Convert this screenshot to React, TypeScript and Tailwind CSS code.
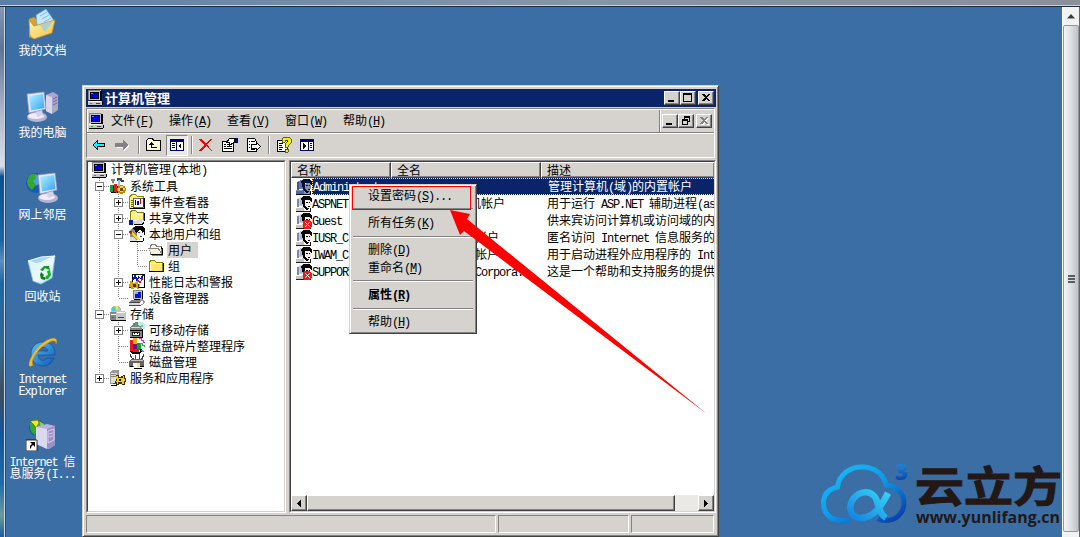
import type { ReactNode } from "react";
import clsx from "clsx";

// Chinese runs are 12px per glyph, latin runs are 6px per glyph
function Txt({ s, className }: { s: string; className?: string }) {
   const parts = s.split(/([\x20-\x7e]+)/).filter(Boolean);
   return (
      <span className={clsx("whitespace-pre", className)}>
         {parts.map((part, i) => {
            if (!/^[\x20-\x7e]/.test(part)) return <span key={i}>{part}</span>;
            const bits = part.split(/(&.)/).filter(Boolean);
            return (
               <span key={i} className="font-['Liberation_Mono',monospace] text-[12px] tracking-[-1.2px]">
                  {bits.map((bit, j) =>
                     bit[0] === "&" ? <span key={j} className="underline underline-offset-1">{bit[1]}</span> : bit
                  )}
               </span>
            );
         })}
      </span>
   );
}

function Ico({ children, w = 16, h = 16, className }: { children: ReactNode; w?: number; h?: number; className?: string }) {
   return (
      <svg width={w} height={h} viewBox={`0 0 ${w} ${h}`} shapeRendering="crispEdges" className={clsx("block shrink-0", className)}>
         {children}
      </svg>
   );
}

const ComputerIcon = () => (
   <Ico>
      <path d="M2 0h12v10H2z" fill="#c6c3c6" />
      <path d="M1 0h12v1H2v9H1z" fill="#848284" />
      <path d="M13 1h1v10H3v-1h10zM14 1h1v10h-1z" fill="#000" />
      <path d="M3 2h9v7H3z" fill="#000" />
      <path d="M4 3h7v5H4z" fill="#0000de" />
      <path d="M4 3h2v1H4z" fill="#6b8cff" />
      <path d="M1 11h13l1 1v3H1z" fill="#c6c3c6" />
      <path d="M1 11h13v1H1z" fill="#fff" />
      <path d="M1 15h14v1H1zM15 12h1v3h-1z" fill="#000" />
      <path d="M3 13h2v1H3z" fill="#00c000" />
      <path d="M9 13h4v1H9z" fill="#424142" />
   </Ico>
);

const ToolsIcon = () => (
   <Ico>
      <path d="M1 1h4v2H4v3H2V3H1z" fill="#84867b" />
      <path d="M2 5h2v3H2z" fill="#e7e3e7" />
      <path d="M7 0h5v2h2v2h-3V3H7z" fill="#424142" />
      <path d="M8 2h2v7H8z" fill="#94c6de" />
      <path d="M0 7h4v7H0z" fill="#00a639" />
      <path d="M4 6h3v9H4z" fill="#d62018" />
      <path d="M3 8h1v7H3zM7 8h1v7H7zM1 14h5v1H1z" fill="#000" />
      <path d="M10 7h3v1h2v2h1v3h-1v2h-2v1h-3v-1H8v-2H7v-3h1V8h2z" fill="#b58a00" />
      <path d="M10 8h3v2h2v2h-2v2h-3v-1H8v-3h2z" fill="#f7d54a" />
      <path d="M10 10h3v3h-3z" fill="#734d00" />
   </Ico>
);

const EventIcon = () => (
   <Ico>
      <path d="M0 3l2-3h5l1 2h7v13H0z" fill="#8c8a00" />
      <path d="M1 3l2-2h3l2 2h6v11H1z" fill="#ffef84" />
      <path d="M5 4h9v9H4V6z" fill="#fff" stroke="#000" strokeWidth=".6" />
      <path d="M6 6h1v5H6z" fill="#000" />
      <path d="M8 7h2v4H8z" fill="#0000d6" />
      <path d="M11 5h1v5h-1z" fill="#e00000" />
      <path d="M2 6h2M2 8h2M2 10h2M2 12h2" stroke="#6b6900" />
      <path d="M1 15h15V4h-1v10H1z" fill="#000" />
   </Ico>
);

const ShareIcon = () => (
   <Ico>
      <path d="M1 2l1-2h5l1 2h7v9H1z" fill="#848200" />
      <path d="M2 2l1-1h3l2 2h6v8H2z" fill="#ffef84" />
      <path d="M3 4h11v1H3z" fill="#fff7b5" />
      <path d="M0 10h4v5H0z" fill="#0018b5" />
      <path d="M4 10h5l2-1h3l1 2-3 3H4z" fill="#ded7de" />
      <path d="M4 10h4v1H4z" fill="#fff" />
      <path d="M5 14h8l2-3v2l-2 2H5zM15 3h1v8h-1z" fill="#000" />
   </Ico>
);

const UsersIcon = () => (
   <Ico>
      <path d="M1 4l3-3h5v13H1z" fill="#8c8a84" />
      <path d="M4 2l3-2h6l3 3v5l-2 3h-1l-5-3z" fill="#000" />
      <path d="M8 6l2-2h2l1 2h2v4l-2 3h-3l-2-3z" fill="#f7f3ef" />
      <path d="M9 6h2v1H9zM13 6h1v1h-1zM11 10h2v1h-2z" fill="#424142" />
      <path d="M0 5h2l9 8v2h-2z" fill="#f7d533" />
      <path d="M0 5h3v3H1z" fill="#d61818" />
      <path d="M1 11h4l3 4H1z" fill="#dedbde" />
      <path d="M9 13l2 1 3-2v3H9z" fill="#fff" />
      <path d="M1 15h13v1H1zM14 12h1v3h-1z" fill="#000" />
   </Ico>
);

const FolderIcon = () => (
   <Ico>
      <path d="M1 4l1-2h5l1 2h7v10H1z" fill="#848200" />
      <path d="M2 4l1-1h3l2 2h6v8H2z" fill="#ffe763" />
      <path d="M2 5h12v1H2zM2 6h1v7H2z" fill="#fffbc6" />
      <path d="M1 14h15V5h-1v8H1z" fill="#000" />
   </Ico>
);

const OpenFolderIcon = () => (
   <Ico>
      <path d="M2 4l1-2h4l2 2h5v9H2z" fill="#848284" />
      <path d="M3 4l1-1h2l2 2h5v8H3z" fill="#fffbce" />
      <path d="M0 6h11l4 8H4z" fill="#848284" />
      <path d="M1 7h9l4 6H4z" fill="#f7f3d6" />
      <path d="M3 13h12V7l-2-2v1l1 2v4H3z" fill="#000" />
   </Ico>
);

const PerfIcon = () => (
   <Ico>
      <path d="M3 0h12v13H3z" fill="#fff" stroke="#000" />
      <path d="M4 6l2-4 2 4 2-3 2 2 2-4" fill="none" stroke="#0018d6" strokeWidth="1.4" />
      <path d="M6 9l3-3 2 3 3-5" fill="none" stroke="#e01010" />
      <path d="M1 7h2l1 2h2l1-2h2v3h2v3h-1v2H8v-1H5v1H2v-2H0v-3h1z" fill="#dea500" />
      <path d="M4 10h3v3H4zM0 13h2v1H0zM9 10h1v4H9z" fill="#423400" />
   </Ico>
);

const DeviceIcon = () => (
   <Ico>
      <path d="M4 0h10v9H4z" fill="#c6c3c6" />
      <path d="M4 0h10v1H4zM4 0h1v9H4z" fill="#848284" />
      <path d="M6 2h6v6H6z" fill="#0018ce" />
      <path d="M6 2h3v2H6z" fill="#7bb2ff" />
      <path d="M13 1h1v9H5V9h8z" fill="#000" />
      <path d="M2 10h11l-1 2H1z" fill="#848684" />
      <path d="M0 12h11v3H0z" fill="#ded7de" />
      <path d="M0 12h11v1H0zM0 15h12v1H0z" fill="#424142" />
      <path d="M11 9h3l2 3-2 3h-2z" fill="#9c9a9c" />
      <path d="M12 11h2v3h-2z" fill="#fff" />
   </Ico>
);

const StorageIcon = () => (
   <Ico>
      <path d="M3 0h5l3 3v3H1V2z" fill="#bdbebd" />
      <path d="M2 1h3l1 4H2z" fill="#39d6d6" />
      <path d="M6 0h2v4H6z" fill="#f7e742" />
      <path d="M0 6h12v8H0z" fill="#848684" />
      <path d="M6 5h9l1 2v7H6z" fill="#c6c7c6" />
      <path d="M7 6h8v1H7zM1 8h5v1H1z" fill="#fff" />
      <path d="M8 11h6v1H8z" fill="#424142" />
      <path d="M1 14h15v1H1z" fill="#000" />
      <path d="M2 11h2v1H2z" fill="#00a200" />
   </Ico>
);

const RemovableIcon = () => (
   <Ico>
      <path d="M4 1l4-1 3 2v4H3z" fill="#7b7d7b" />
      <path d="M9 0h4l3 3v4l-4 1-2-3z" fill="#bdefef" />
      <path d="M6 1h2v3H6z" fill="#29c639" />
      <path d="M12 3h2v2h-2z" fill="#a5a2a5" />
      <path d="M2 4h10l1 3v8H1V6z" fill="#848684" />
      <path d="M2 5h9v1H2z" fill="#dedbde" />
      <path d="M1 8h12v1H1zM1 15h13v1H1zM13 7h1v8h-1z" fill="#000" />
      <path d="M3 10h8v4H3z" fill="#212021" />
      <path d="M4 11h6v2H4z" fill="#fff" />
      <path d="M5 11h1v1H5zM8 11h1v1H8z" fill="#000" />
   </Ico>
);

const DefragIcon = () => (
   <Ico>
      <path d="M1 2h3v11H1z" fill="#e71818" />
      <path d="M4 0h4v6H4z" fill="#d6b600" />
      <path d="M8 5h4v6H8z" fill="#00a621" />
      <path d="M4 6h4v6H4z" fill="#7b1073" />
      <path d="M3 11h8l-2 4H3z" fill="#e71818" />
      <path d="M1 13h3v1h7v-3h2v3l-3 2H3z" fill="#000" />
      <path d="M10 0h2v2h2v2h2" stroke="#e721de" fill="none" />
      <path d="M11 5h2v2h2v2" stroke="#10ce39" fill="none" />
      <path d="M12 12l3 2" stroke="#18a6e7" />
      <path d="M5 8h2v2H5z" fill="#1828e7" />
   </Ico>
);

const DiskIcon = () => (
   <Ico>
      <path d="M1 0h1v2h1v2h2v2H3V4H2V3H1zM14 0h1v3h-1v2h-2V4h1V2h1z" fill="#424142" />
      <path d="M6 1h1v5H6z" fill="#1848c6" />
      <path d="M10 0h1v6h-1z" fill="#d61010" />
      <path d="M2 5h12l1 2v6H0V7z" fill="#636563" />
      <path d="M2 6h12v1H2z" fill="#c6c3c6" />
      <path d="M4 9h7v5H6L4 12z" fill="#fff" />
      <path d="M8 9h3v4H8z" fill="#f7e773" />
      <path d="M1 12h3v1H1zM11 12h4v1h-4zM5 14h8v1H5z" fill="#000" />
   </Ico>
);

const ServicesIcon = () => (
   <Ico>
      <path d="M0 2l2-2h7v2l-1 12H0z" fill="#9c9a9c" />
      <path d="M1 3h6v10H1z" fill="#dedbde" />
      <path d="M1 4h5v1H1zM1 6h5v1H1z" fill="#848284" />
      <path d="M3 13h3v1H3z" fill="#e01010" />
      <path d="M1 15h6v1H1z" fill="#000" />
      <path d="M6 5h3v2h2V6h2V5h2v3h1v4h-1v3h-3v-1H9v1H6v-2H5v-2h1z" fill="#423400" />
      <path d="M6 6h2v2h5V6h1v3h1v2h-1v3h-2v-2H8v2H7v-2H6v-1h1V9H6z" fill="#f7ce29" />
      <path d="M9 9h2v2H9z" fill="#000" />
   </Ico>
);

function UserIcon({ disabled, selected }: { disabled?: boolean; selected?: boolean }) {
   return (
      <Ico>
         <path d="M2 2l3-1h4v9H2z" fill={selected ? "#6b7da5" : "#ceced6"} />
         <path d="M1 3h2v8H1z" fill={selected ? "#42558c" : "#8486a5"} />
         <path d="M4 4h3v5H4z" fill={selected ? "#5a6db5" : "#9cbede"} />
         <path d="M5 2l2-2h6l3 2v4l-2-1-1-1H9l1 4 3 4v1l-3 1-3-4z" fill={selected ? "#00103a" : "#000"} />
         <path d="M9 6l1-2h3l2 2v3l-1 3h-3l-2-3z" fill={selected ? "#8c92a5" : "#f7ebe7"} />
         <path d="M10 6h2v1h-2zM13 6h1v1h-1zM12 10h2v1h-2z" fill={selected ? "#00103a" : "#000"} />
         <path d="M0 11h8v4H0z" fill={selected ? "#52659c" : "#c6c3c6"} />
         <path d="M0 11h6v1H0z" fill={selected ? "#8492b5" : "#fff"} />
         <path d="M0 15h15v1H0zM14 12h1v3h-1z" fill={selected ? "#00103a" : "#212021"} />
         <path d="M8 12l3 2 3-2v3H8z" fill={selected ? "#8492b5" : "#fff"} />
         {disabled && (
            <>
               <path d="M8 7h6v1h1v1h1v5h-1v1h-1v1H8v-1H7V8h1z" fill="#f01818" />
               <path d="M9 9l5 5M14 9l-5 5" stroke="#fff" strokeWidth="1.4" />
            </>
         )}
      </Ico>
   );
}

// One 19x16 tree cell: guide line, optional branch and expander box
function Guide({ kind }: { kind: string }) {
   const box = kind.length > 1;
   return (
      <Ico w={19}>
         <path d={kind[0] === "L" ? "M8.5 0V8" : "M8.5 0V16"} stroke="#848284" strokeDasharray="1 1" />
         {kind[0] !== "|" && <path d="M9 8.5H19" stroke="#848284" strokeDasharray="1 1" />}
         {box && (
            <>
               <rect x="4.5" y="4.5" width="8" height="8" fill="#fff" stroke="#848284" />
               <path d="M6 8.5h5" stroke="#000" />
               {kind[1] === "+" && <path d="M8.5 6v5" stroke="#000" />}
            </>
         )}
      </Ico>
   );
}

const tree = [
   { label: "计算机管理(本地)", guides: [], icon: <ComputerIcon /> },
   { label: "系统工具", guides: ["T-"], icon: <ToolsIcon /> },
   { label: "事件查看器", guides: ["|", "T+"], icon: <EventIcon /> },
   { label: "共享文件夹", guides: ["|", "T+"], icon: <ShareIcon /> },
   { label: "本地用户和组", guides: ["|", "T-"], icon: <UsersIcon /> },
   { label: "用户", guides: ["|", "|", "T"], icon: <OpenFolderIcon />, selected: true },
   { label: "组", guides: ["|", "|", "L"], icon: <FolderIcon /> },
   { label: "性能日志和警报", guides: ["|", "T+"], icon: <PerfIcon /> },
   { label: "设备管理器", guides: ["|", "L"], icon: <DeviceIcon /> },
   { label: "存储", guides: ["T-"], icon: <StorageIcon /> },
   { label: "可移动存储", guides: ["|", "T+"], icon: <RemovableIcon /> },
   { label: "磁盘碎片整理程序", guides: ["|", "T"], icon: <DefragIcon /> },
   { label: "磁盘管理", guides: ["|", "L"], icon: <DiskIcon /> },
   { label: "服务和应用程序", guides: ["L+"], icon: <ServicesIcon /> },
];

const users = [
   { name: "Administrator", full: "", desc: "管理计算机(域)的内置帐户", selected: true },
   { name: "ASPNET", full: "ASP.NET 计算机帐户", desc: "用于运行 ASP.NET 辅助进程(aspnet_wp.exe)" },
   { name: "Guest", full: "", desc: "供来宾访问计算机或访问域的内置帐户", disabled: true },
   { name: "IUSR_C...", full: "Internet 来宾帐户", desc: "匿名访问 Internet 信息服务的内置帐户" },
   { name: "IWAM_C...", full: "启动 IIS 进程帐户", desc: "用于启动进程外应用程序的 Internet 信息服务" },
   { name: "SUPPORT...", full: "CN=Microsoft Corpora...", desc: "这是一个帮助和支持服务的提供商帐户", disabled: true },
];

const raised = "border border-t-white border-l-white border-r-[#424142] border-b-[#424142] shadow-[inset_-1px_-1px_0_#848284] bg-[#d6d3ce]";

function WinButton({ children, className }: { children: ReactNode; className?: string }) {
   return (
      <div className={clsx("h-[14px] w-4", raised, className)}>
         <svg width="14" height="12" viewBox="0 0 14 12" shapeRendering="crispEdges" className="block">
            {children}
         </svg>
      </div>
   );
}

const ToolSep = ({ className }: { className?: string }) => (
   <div className={clsx("h-[18px] w-[2px] border-l border-[#848284] bg-white", className)} />
);

const MenuSep = ({ className }: { className?: string }) => (
   <div className={clsx("mx-[2px] h-[2px] border-t border-[#848284] bg-white", className)} />
);

function MenuItem({ s, className }: { s: string; className?: string }) {
   return (
      <div className={clsx("flex h-[18px] items-center pl-[17px]", className)}>
         <Txt s={s} />
      </div>
   );
}

function ContextMenu() {
   return (
      <div className="absolute left-[349px] top-[184px] h-[150px] w-[128px] border border-[#d6d3ce] border-r-[#424142] border-b-[#424142] bg-[#d6d3ce] p-px shadow-[inset_1px_1px_0_#fff,inset_-1px_-1px_0_#848284]">
         <MenuItem s="设置密码(&S)..." className="mt-px" />
         <MenuSep className="mt-[3px]" />
         <MenuItem s="所有任务(&K)" className="mt-1" />
         <MenuSep className="mt-1" />
         <MenuItem s="删除(&D)" className="mt-[3px]" />
         <MenuItem s="重命名(&M)" />
         <MenuSep className="mt-[3px]" />
         <MenuItem s="属性(&R)" className="mt-1 font-bold" />
         <MenuSep className="mt-1" />
         <MenuItem s="帮助(&H)" className="mt-[3px]" />
         <div className="absolute left-[2px] top-px h-[24px] w-[119px] border border-[#f00]" />
      </div>
   );
}

function Toolbar() {
   return (
      <div className="flex h-[22px] items-center pl-[5px]">
         <Ico w={14} h={14}>
            <path d="M0 7l5-5h1v3h7v4H6v3H5z" fill="#000" />
            <path d="M1 7l4-4v3h7v2H5v2z" fill="#00ffff" />
         </Ico>
         <Ico w={15} h={14} className="ml-[9px]">
            <path d="M14 8l-5 5v-3H2V6h7V3z" fill="#fff" />
            <path d="M13 7L8 2v3H0v4h8v3z" fill="#848284" />
         </Ico>
         <ToolSep className="ml-[8px]" />
         <Ico className="ml-[5px]">
            <path d="M1.500 3.500l2-2h4l1 2h7v10h-14z" fill="#fffbce" stroke="#000" />
            <path d="M6 5h1v1h1v1h1v1H7v2h5v1H6V8H4V7h1V6h1z" fill="#000" />
         </Ico>
         <div className="ml-[5px] flex h-[21px] w-[22px] items-center justify-center border border-[#848284] border-r-white border-b-white bg-[#ebe9e6]">
            <Ico w={14} h={12}>
               <path d="M0 0h14v12H0z" fill="#00006b" />
               <path d="M1 3h5v8H1zM7 3h6v8H7z" fill="#fff" />
               <path d="M2 4h3v1H2zM2 6h3v1H2zM2 8h3v1H2z" fill="#00006b" />
               <path d="M11 4v6L8 7z" fill="#000" />
            </Ico>
         </div>
         <ToolSep className="ml-[3px]" />
         <Ico w={14} h={14} className="ml-[6px]">
            <path d="M0 1h2l5 4 5-4h2L8 6l5 7h-1L7 8l-5 5H0l5-6z" fill="#f00" />
         </Ico>
         <Ico className="ml-[9px]">
            <path d="M.5 4.500h11v10H.5z" fill="#fff" stroke="#000" />
            <path d="M2 7h2v1H2zM5 7h5v1H5zM2 9h2v1H2zM5 9h5v1H5zM2 11h8v1H2z" fill="#000" />
            <path d="M4.500 5.500l3-4h5v4l-3 1-2 2V6z" fill="#fff" stroke="#000" />
            <path d="M13 1h3v5h-3z" fill="#000084" />
         </Ico>
         <Ico className="ml-[8px]">
            <path d="M1.500 1.500h7l2 3v10h-9z" fill="#fff" stroke="#000" />
            <path d="M3 4h1v1H3zM5 4h4v1H5zM3 7h1v1H3zM3 10h1v1H3zM5 12h4v1H5z" fill="#000" />
            <path d="M5.500 7.500h5v-2l4 4-4 4v-2h-5z" fill="#fff" stroke="#000" />
         </Ico>
         <ToolSep className="ml-[6px]" />
         <Ico className="ml-[6px]">
            <path d="M1.500 3.500h10v11h-10z" fill="#fff" stroke="#000" />
            <path d="M3 6h4v1H3zM3 8h3v1H3zM3 10h4v1H3zM3 12h3v1H3z" fill="#000" />
            <path d="M6 2l2-2h5l2 2v4l-3 3v1H9V7l3-3-1-1H9v2H6z" fill="#f7ef00" stroke="#424100" strokeWidth=".8" />
            <path d="M9 12h3v3H9z" fill="#f7ef00" stroke="#424100" strokeWidth=".8" />
         </Ico>
         <Ico w={14} h={12} className="ml-[8px]">
            <path d="M0 0h14v12H0z" fill="#00006b" />
            <path d="M1 3h7v8H1zM9 3h4v8H9z" fill="#fff" />
            <path d="M10 4h2v1h-2zM10 6h2v1h-2zM10 8h2v1h-2z" fill="#00006b" />
            <path d="M3 4v6l4-3z" fill="#000" />
         </Ico>
      </div>
   );
}

function ListPane() {
   return (
      <div className="flex w-[427px] flex-col overflow-hidden border border-t-[#848284] border-l-[#848284] border-r-white border-b-white">
         <div className="flex min-h-0 flex-1 flex-col overflow-hidden border border-t-[#424142] border-l-[#424142] border-r-[#d6d3ce] border-b-[#d6d3ce] bg-white">
            <div className="flex h-4 shrink-0">
               {["名称", "全名", "描述"].map((title, i) => (
                  <div key={title} className={clsx("flex shrink-0 items-center pl-[5px]", raised, i === 0 ? "w-[100px]" : i === 1 ? "w-[150px]" : "w-[173px] border-r-0")}>
                     <Txt s={title} />
                  </div>
               ))}
            </div>
            {users.map(u => (
               <div key={u.name} className={clsx("flex h-[17px] shrink-0 items-center pl-[5px]", u.selected && "text-white")}>
                  <UserIcon disabled={u.disabled} selected={u.selected} />
                  <div className={clsx("flex h-[17px] w-[402px] overflow-hidden", u.selected && "border border-r-0 border-dotted border-[#f7db94] bg-[#0a246a] leading-[14px]")}>
                     <Txt s={u.name} className="w-[85px] shrink-0 overflow-hidden" />
                     <Txt s={u.full} className="w-[150px] shrink-0" />
                     <Txt s={u.desc} />
                  </div>
               </div>
            ))}
            <div className="mt-auto flex h-4 shrink-0 bg-[#ebe9e6]">
               <div className={clsx("flex w-4 items-center justify-center", raised)}>
                  <Ico w={4} h={7}><path d="M4 0v7L0 3.500z" /></Ico>
               </div>
               <div className={clsx("w-[368px]", raised)} />
               <div className="flex-1" />
               <div className={clsx("flex w-4 items-center justify-center", raised)}>
                  <Ico w={4} h={7}><path d="M0 0v7l4-3.500z" /></Ico>
               </div>
            </div>
         </div>
      </div>
   );
}

function ManagementWindow() {
   return (
      <div className="absolute left-[82px] top-[85px] flex h-[452px] w-[637px] flex-col border border-[#d6d3ce] border-r-[#424142] border-b-[#424142] bg-[#d6d3ce] pb-[3px] pl-[3px] pr-[2px] pt-[3px] shadow-[inset_1px_1px_0_#fff,inset_-1px_-1px_0_#848284]">
         <div className="flex h-[18px] shrink-0 items-center bg-[#0a246a] pl-px pr-[2px] text-white">
            <ComputerIcon />
            <Txt s="计算机管理" className="ml-[2px] text-[13px] font-bold" />
            <WinButton className="ml-auto"><path d="M3 8h6v2H3z" /></WinButton>
            <WinButton>
               <path d="M2 1h9v2H2zM2 9h9v1H2zM2 2h1v8H2zM10 2h1v8h-1z" />
            </WinButton>
            <WinButton className="ml-[2px]">
               <path d="M3 2h2l2 2 2-2h2L8 5.500 11 9H9L7 7 5 9H3l3-3.500z" />
            </WinButton>
         </div>
         <div className="mt-px h-[50px] w-[629px] shrink-0 border border-[#848284] border-r-white border-b-white">
            <div className="flex h-[24px] items-center border-b border-[#848284] pl-px shadow-[inset_1px_1px_0_#fff]">
               <ComputerIcon />
               <div className="ml-[7px] flex gap-4">
                  {["文件(&F)", "操作(&A)", "查看(&V)", "窗口(&W)", "帮助(&H)"].map(m => (
                     <Txt key={m} s={m} className="w-[42px]" />
                  ))}
               </div>
               <div className="ml-auto flex h-[22px] items-center border-l border-[#848284] pl-[2px] pr-[2px] shadow-[inset_1px_0_0_#fff]">
                  <WinButton><path d="M3 8h6v2H3z" /></WinButton>
                  <WinButton>
                     <path d="M5 1h6v2H5zM10 3h1v4H9V6h1zM5 3h1v1H5zM3 4h6v2H3zM3 6h1v4H3zM8 6h1v4H8zM4 9h4v1H4z" />
                  </WinButton>
                  <WinButton className="ml-[2px]">
                     <path d="M4 3h2l2 2 2-2h2L9 6.500 12 10h-2L8 8l-2 2H4l3-3.500z" fill="#fff" />
                     <path d="M3 2h2l2 2 2-2h2L8 5.500 11 9H9L7 7 5 9H3l3-3.500z" fill="#848284" />
                  </WinButton>
               </div>
            </div>
            <div className="h-px bg-white" />
            <Toolbar />
         </div>
         <div className="mt-[2px] flex h-[353px] shrink-0 gap-[3px]">
            <div className="w-[200px] border border-t-[#848284] border-l-[#848284] border-r-white border-b-white">
               <div className="h-full border border-t-[#424142] border-l-[#424142] border-r-[#d6d3ce] border-b-[#d6d3ce] bg-white pl-[3px]">
                  {tree.map(node => (
                     <div key={node.label} className="flex h-4 items-center">
                        {node.guides.map((g, i) => <Guide key={i} kind={g} />)}
                        {node.icon}
                        <div className={clsx("ml-[3px] flex h-4 items-center pl-px pr-[6px]", node.selected && "bg-[#d6d3ce]")}>
                           <Txt s={node.label} />
                        </div>
                     </div>
                  ))}
               </div>
            </div>
            <ListPane />
         </div>
         <div className="mt-[2px] flex h-[18px] shrink-0 gap-[2px]">
            <div className="w-[410px] border border-[#848284] border-r-white border-b-white" />
            <div className="w-[131px] border border-[#848284] border-r-white border-b-white" />
            <div className="w-[83px] border border-[#848284] border-r-white border-b-white" />
         </div>
      </div>
   );
}

const Monitor = ({ x, y }: { x: number; y: number }) => (
   <g transform={`translate(${x} ${y})`}>
      <ellipse cx="10" cy="25" rx="10" ry="5" fill="#b9b4d6" />
      <ellipse cx="9" cy="24" rx="8" ry="3" fill="#efedf9" />
      <path d="M8 18l7-1 1 6-6 2z" fill="#d5d1ea" />
      <path d="M0 2l17-2 2 17-17 4z" fill="#e9e6f6" stroke="#9793bd" strokeWidth=".8" />
      <path d="M2 4l14-2 1.500 14L4 18.500z" fill="url(#screen)" />
   </g>
);

const Globe = ({ cx, cy, r }: { cx: number; cy: number; r: number }) => (
   <g>
      <circle cx={cx} cy={cy} r={r} fill="#1958bd" />
      <circle cx={cx - 2} cy={cy - 3} r={r * 0.6} fill="#4aa0e8" />
      <path d={`M${cx - r + 1} ${cy - 2}q3 -8 8 -7l1 4 -3 3 3 4 -4 5q-5 -3 -5 -9z`} fill="#35a829" />
      <path d={`M${cx + 2} ${cy - r + 1}l5 3 1 7 -4 -2z`} fill="#7ed348" />
   </g>
);

const desktopIcons = [
   {
      top: 8,
      label: ["我的文档"],
      art: (
         <>
            <path d="M3 11l5-2 3 3 14-5 2 14-19 10-5-2z" fill="#dda129" />
            <path d="M10 7L20 1l9 13-9 9-9-4z" fill="#c8e7fb" stroke="#5aa1d9" strokeWidth=".8" />
            <path d="M14 8l7-4M16 11l7-4M18 14l7-4" stroke="#7fbbe8" />
            <path d="M3 12l5 6 21-6-3 13L8 31l-4-3z" fill="url(#folder)" stroke="#c58a1c" strokeWidth=".8" />
            <path d="M14 17l5 7 8-11z" fill="#8ccdf2" opacity=".75" />
         </>
      ),
   },
   {
      top: 90,
      label: ["我的电脑"],
      art: (
         <>
            <path d="M20 5l7-3 5 3v15l-6 4-6-3z" fill="#aaa5cf" />
            <path d="M20 5l6 2v17l-6-3z" fill="#d9d6ec" />
            <path d="M27 9l4-2M27 12l4-2M27 15l4-2" stroke="#6d689c" />
            <circle cx="29" cy="19" r="1" fill="#8be52d" />
            <Monitor x={1} y={2} />
         </>
      ),
   },
   {
      top: 172,
      label: ["网上邻居"],
      art: (
         <>
            <Globe cx={10} cy={11} r={10} />
            <Monitor x={12} y={1} />
         </>
      ),
   },
   {
      top: 254,
      label: ["回收站"],
      art: (
         <>
            <path d="M2 7l13-3 14-2-3 22-11 6-8-3z" fill="url(#bin)" stroke="#8dc5e6" strokeWidth=".8" />
            <path d="M2 7l9 3 18-8-14 1z" fill="#a5d8f4" stroke="#f3fbff" />
            <path d="M14 16l4-4 5 0 1 4-3-1-2-1-2 3z" fill="#0c9a1c" />
            <path d="M24 16l1 5-3 4h-3l1-3 2-1-1-4z" fill="#19b027" />
            <path d="M19 26l-4-1-1-4 1-3 3 3-1 2h2z" fill="#0a8518" />
         </>
      ),
   },
   {
      top: 336,
      label: ["Internet", "Explorer"],
      art: (
         <>
            <path d="M17 6c-7 0-12 5-12 12s5 12 12 12c5 0 9-3 11-8h-7c-3 4-9 3-9-3h17C30 12 25 6 17 6zm-5 9c1-5 9-5 10 0z" fill="url(#ie)" fillRule="evenodd" stroke="#0d4894" strokeWidth=".6" />
            <path d="M7 29C1 34 2 25 9 15S27 0 30 3c1 1 1 3 0 5 0-4-3-4-8-1C12 12 4 24 7 29z" fill="#f6bc25" stroke="#c98b10" strokeWidth=".4" />
         </>
      ),
   },
   {
      top: 419,
      label: ["Internet 信", "息服务(I..."],
      art: (
         <>
            <Globe cx={11} cy={9} r={8} />
            <path d="M4 2l8-1 1 3-3 5-2-3z" fill="#f3e71d" stroke="#4a5a00" strokeWidth=".6" />
            <path d="M10 8l11-3 8 2v19l-6 4-13-5z" fill="#b9b1dd" />
            <path d="M10 8l11 2v20l-11-5z" fill="#dcd8f0" />
            <path d="M21 10l8-3v19l-6 4h-2z" fill="#9a90c8" />
            <path d="M22 12l6-2v11l-6 3zM23 15l4-1M23 18l4-1" stroke="#e6e1f8" fill="none" strokeWidth=".8" />
            <path d="M0 21h11v11H0z" fill="#fff" stroke="#000" strokeWidth=".8" />
            <path d="M4 23h5v5l-2-2c-2 1-2 3-2 4-2-2-1-4 1-5z" fill="#000" />
         </>
      ),
   },
];

function Logo() {
   return (
      <svg width="262" height="77" viewBox="0 0 262 77" className="absolute left-[818px] top-[460px]">
         <defs>
            <linearGradient id="cloud" x1="0" y1="0" x2="1" y2="1">
               <stop offset="0" stopColor="#1fc0f4" />
               <stop offset=".5" stopColor="#0a9aec" />
               <stop offset="1" stopColor="#0a36a4" />
            </linearGradient>
            <linearGradient id="alpha" x1="1" y1="0" x2="0" y2="1">
               <stop offset="0" stopColor="#34d4f6" />
               <stop offset="1" stopColor="#1484e2" />
            </linearGradient>
            <linearGradient id="cube" x1="0" y1="0" x2="0" y2="1">
               <stop offset="0" stopColor="#1fa4ee" />
               <stop offset="1" stopColor="#0a2f9c" />
            </linearGradient>
         </defs>
         <path d="M31 60.500H22C11 60 5.500 52 5.500 43c0-9 6-14 14-16C21 14 33 6 46 7c12 1 20 8 22 18 11 1 18 9 18 18 0 10-8 17.500-18 17.500-3 0-6-.5-8-2" fill="none" stroke="url(#cloud)" strokeWidth="5" />
         <path d="M70 33C64 45 56 58 43 58c-10 0-13-9-9-17s16-13 23-4c4 6 3 16 11 21" fill="none" stroke="url(#alpha)" strokeWidth="6.500" />
         <text x="77" y="20" fontSize="22" fontWeight="800" fill="url(#cube)" fontFamily="Open Sans, sans-serif">3</text>
         <text x="97" y="42" fontSize="42" fontWeight="700" fill="#231815" stroke="#231815" strokeWidth="1" textLength="147" lengthAdjust="spacingAndGlyphs" fontFamily="Noto Sans CJK SC, sans-serif">云立方</text>
         <text x="98" y="63" fontSize="16" fontWeight="700" fill="#231815" textLength="144" lengthAdjust="spacingAndGlyphs" fontFamily="Open Sans, sans-serif">www.yunlifang.cn</text>
      </svg>
   );
}

function App() {
   return (
      <div className="relative flex h-[537px] w-[1080px] flex-col overflow-hidden bg-[#3a6ea5] font-['Noto_Sans_CJK_SC',sans-serif] text-xs leading-4 text-black">
         <svg width="0" height="0" className="absolute">
            <defs>
               <linearGradient id="screen" x1="0" y1="0" x2="1" y2="1">
                  <stop offset="0" stopColor="#b5f1ff" />
                  <stop offset="1" stopColor="#2fa5f5" />
               </linearGradient>
               <linearGradient id="folder" x1="0" y1="0" x2="1" y2="1">
                  <stop offset="0" stopColor="#fff6b0" />
                  <stop offset="1" stopColor="#f2bf45" />
               </linearGradient>
               <linearGradient id="bin" x1="0" y1="0" x2="1" y2="1">
                  <stop offset="0" stopColor="#d6effc" />
                  <stop offset=".6" stopColor="#eef9ff" />
                  <stop offset="1" stopColor="#8ec9ec" />
               </linearGradient>
               <linearGradient id="ie" x1="0" y1="0" x2="1" y2="1">
                  <stop offset="0" stopColor="#5cc4f8" />
                  <stop offset="1" stopColor="#0e55b5" />
               </linearGradient>
            </defs>
         </svg>

         {/* Frame of the outer session window */}
         <div className="h-[5px] shrink-0 bg-linear-to-r from-[#5b7fa8] via-[#8595a8] to-[#8a8f9a]" />
         <div className="h-[2px] shrink-0 border-t border-[#c5d3dd] bg-[#1d2b3a]" />
         <div className="flex flex-1">
            <div className="w-[4px] bg-[linear-gradient(180deg,#8497b5_0%,#5e7396_8%,#b0b6cc_20%,#dadfe9_30%,#0f4f8f_32%,#1b64a2_44%,#5b8fbc_48%,#1f66a4_52%,#34688f_65%,#3f4d60_73%,#145396_80%,#1f6cab_90%,#6c9a9c_96%,#1a5c9e_100%)]" />
            <div className="w-px bg-[#c5d3dd]" />
            <div className="w-px bg-[#2e4c6b]" />
            <div className="flex-1" />
            <div className="flex w-[17px] flex-col border-l border-[#fff] bg-[#f2f2f2]">
               <div className="flex h-[18px] items-center justify-center">
                  <svg width="8" height="5" viewBox="0 0 8 5"><path d="M4 0l4 4.500H0z" fill="#3c3c3c" /></svg>
               </div>
               <div className="flex h-[507px] flex-col items-center justify-center gap-px rounded-[2px] border border-[#979797] bg-linear-to-r from-[#f5f5f5] via-[#dcdee2] to-[#bfc3ca]">
                  <div className="h-[2px] w-[7px] bg-[#5a5d63]" />
                  <div className="h-[2px] w-[7px] bg-[#5a5d63]" />
                  <div className="h-[2px] w-[7px] bg-[#5a5d63]" />
               </div>
            </div>
            <div className="w-px bg-[#63666d]" />
         </div>

         {/* Desktop icons */}
         {desktopIcons.map(icon => (
            <div key={icon.label[0]} className="absolute left-[6px] flex w-[73px] flex-col items-center text-white" style={{ top: icon.top }}>
               <svg width="33" height="32" viewBox="0 0 33 32" className="block">{icon.art}</svg>
               <div className="mt-1 flex flex-col items-center leading-3">
                  {icon.label.map(line => <Txt key={line} s={line} className="h-3" />)}
               </div>
            </div>
         ))}

         <Logo />
         <ManagementWindow />
         <ContextMenu />

         {/* Pointer arrow towards the password item */}
         <svg width="262" height="210" viewBox="0 0 262 210" className="absolute left-[448px] top-[207px]">
            <path d="M2 3L22 7 19 12 259 207 16 24 12 28z" fill="#f00" />
         </svg>
      </div>
   );
}

export default App;
